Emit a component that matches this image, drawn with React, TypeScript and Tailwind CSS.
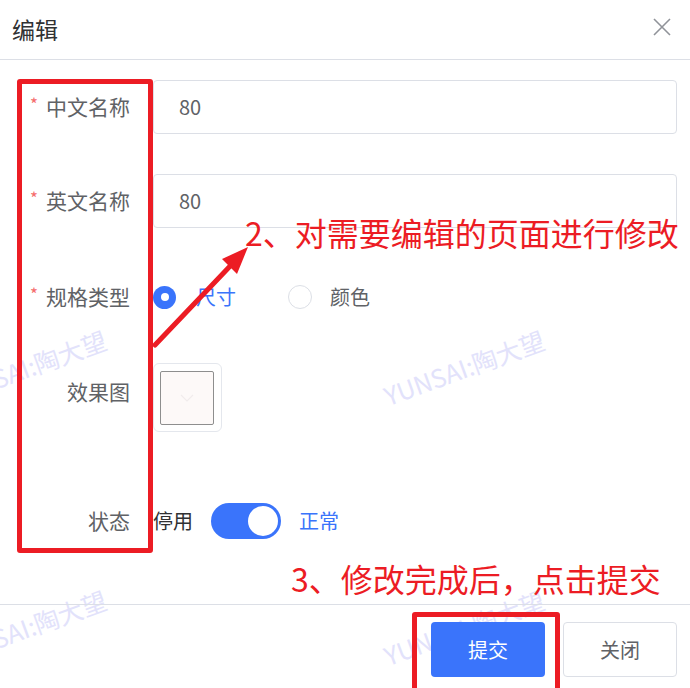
import React from 'react';

const RED = '#ec1c24';

const Watermark = ({ cx, cy }: { cx: number; cy: number }) => (
  <div
    className="absolute whitespace-nowrap text-center text-[25px] leading-none text-[#e2e2fb] select-none"
    style={{ left: cx - 110, top: cy - 12, width: 220, transform: 'rotate(-20deg)' }}
  >
    YUNSAI:陶大望
  </div>
);

const Label = ({ text, required }: { text: string; required?: boolean }) => (
  <div className="w-[130px] shrink-0 flex justify-end items-center text-[21px] text-[#606266]">
    {required && <span className="text-[#f56c6c] text-[17px] mr-[8px] -mt-[6px]">*</span>}
    {text}
  </div>
);

export default function App() {
  return (
    <div
      className="relative w-[690px] h-[688px] bg-white overflow-hidden"
      style={{ fontFamily: '"Noto Sans CJK SC", "Noto Sans", sans-serif' }}
    >
      {/* watermarks */}
      <Watermark cx={26} cy={367} />
      <Watermark cx={464} cy={367} />
      <Watermark cx={26} cy={627} />
      <Watermark cx={464} cy={627} />

      <div className="relative">
        {/* header */}
        <div className="h-[60px] border-b border-[#dcdfe6] flex items-center justify-between pl-[12px] pr-[19px]">
          <span className="text-[23px] text-[#303133]">编辑</span>
          <svg width="18" height="18" viewBox="0 0 18 18" className="mt-[-6px]">
            <path d="M1 1L17 17M17 1L1 17" stroke="#909399" strokeWidth="1.6" />
          </svg>
        </div>

        {/* body */}
        <div className="h-[544px] pt-[20px] pr-[13px]">
          <div className="flex h-[54px] gap-[23px]">
            <Label text="中文名称" required />
            <div className="flex-1 border border-[#dcdfe6] rounded-[4px] flex items-center pl-[25px] text-[20px] text-[#606266]">
              80
            </div>
          </div>

          <div className="flex h-[54px] gap-[23px] mt-[40px]">
            <Label text="英文名称" required />
            <div className="flex-1 border border-[#dcdfe6] rounded-[4px] flex items-center pl-[25px] text-[20px] text-[#606266]">
              80
            </div>
          </div>

          <div className="flex h-[46px] gap-[23px] mt-[46px]">
            <Label text="规格类型" required />
            <div className="flex items-center text-[20px]">
              <span className="w-[23px] h-[23px] rounded-full bg-[#3a74fb] flex items-center justify-center">
                <span className="w-[8px] h-[8px] rounded-full bg-white" />
              </span>
              <span className="ml-[20px] text-[#3a74fb]">尺寸</span>
              <span className="ml-[52px] w-[24px] h-[24px] rounded-full border border-[#dcdfe6] bg-white" />
              <span className="ml-[18px] text-[#606266]">颜色</span>
            </div>
          </div>

          <div className="flex gap-[23px] mt-[43px]">
            <div className="w-[130px] shrink-0 text-right text-[21px] text-[#606266] pt-[14px] leading-[29px]">效果图</div>
            <div className="w-[69px] h-[69px] border border-[#e4e7ed] rounded-[6px] pl-[6px] pt-[7px] bg-white">
              <div className="w-[54px] h-[54px] border border-[#8e8e8e] rounded-[2px] bg-[#fdf9f8] flex items-center justify-center">
                <svg width="14" height="8" viewBox="0 0 14 8">
                  <path d="M1 1L7 7L13 1" stroke="#f1ecec" strokeWidth="1.2" fill="none" />
                </svg>
              </div>
            </div>
          </div>

          <div className="flex h-[36px] items-center mt-[71px]">
            <div className="w-[130px] shrink-0 text-right text-[21px] text-[#606266]">状态</div>
            <div className="flex items-center text-[20px] ml-[23px]">
              <span className="text-[#303133]">停用</span>
              <span className="ml-[18px] w-[70px] h-[36px] rounded-full bg-[#3a74fb] flex items-center justify-end pr-[3px]">
                <span className="w-[30px] h-[30px] rounded-full bg-white" />
              </span>
              <span className="ml-[18px] text-[#3a74fb]">正常</span>
            </div>
          </div>
        </div>

        {/* footer */}
        <div className="border-t border-[#dcdfe6] flex justify-end gap-[18px] pt-[17px] pr-[13px]">
          <button className="w-[114px] h-[55px] rounded-[4px] bg-[#3a74fb] text-white text-[20px]">提交</button>
          <button className="w-[114px] h-[55px] rounded-[4px] border border-[#dcdfe6] bg-white text-[#606266] text-[20px]">关闭</button>
        </div>
      </div>

      {/* annotations */}
      <div className="absolute left-[17px] top-[79px] w-[136px] h-[474px] border-[5px] border-[#ec1c24] rounded-[3px]" />
      <div className="absolute left-[412px] top-[612px] w-[148px] h-[90px] border-[5px] border-[#ec1c24] rounded-[3px]" />
      <svg className="absolute left-0 top-0" width="690" height="688" viewBox="0 0 690 688">
        <path d="M155 345L234 262" stroke={RED} strokeWidth="5" strokeLinecap="round" />
        <polygon points="248,247 222,259 237,274" fill={RED} />
      </svg>
      <div className="absolute left-[245px] top-[216px] text-[32px] leading-none whitespace-nowrap" style={{ color: RED }}>
        2、对需要编辑的页面进行修改
      </div>
      <div className="absolute left-[291px] top-[562px] text-[32px] leading-none whitespace-nowrap" style={{ color: RED }}>
        3、修改完成后，点击提交
      </div>
    </div>
  );
}
